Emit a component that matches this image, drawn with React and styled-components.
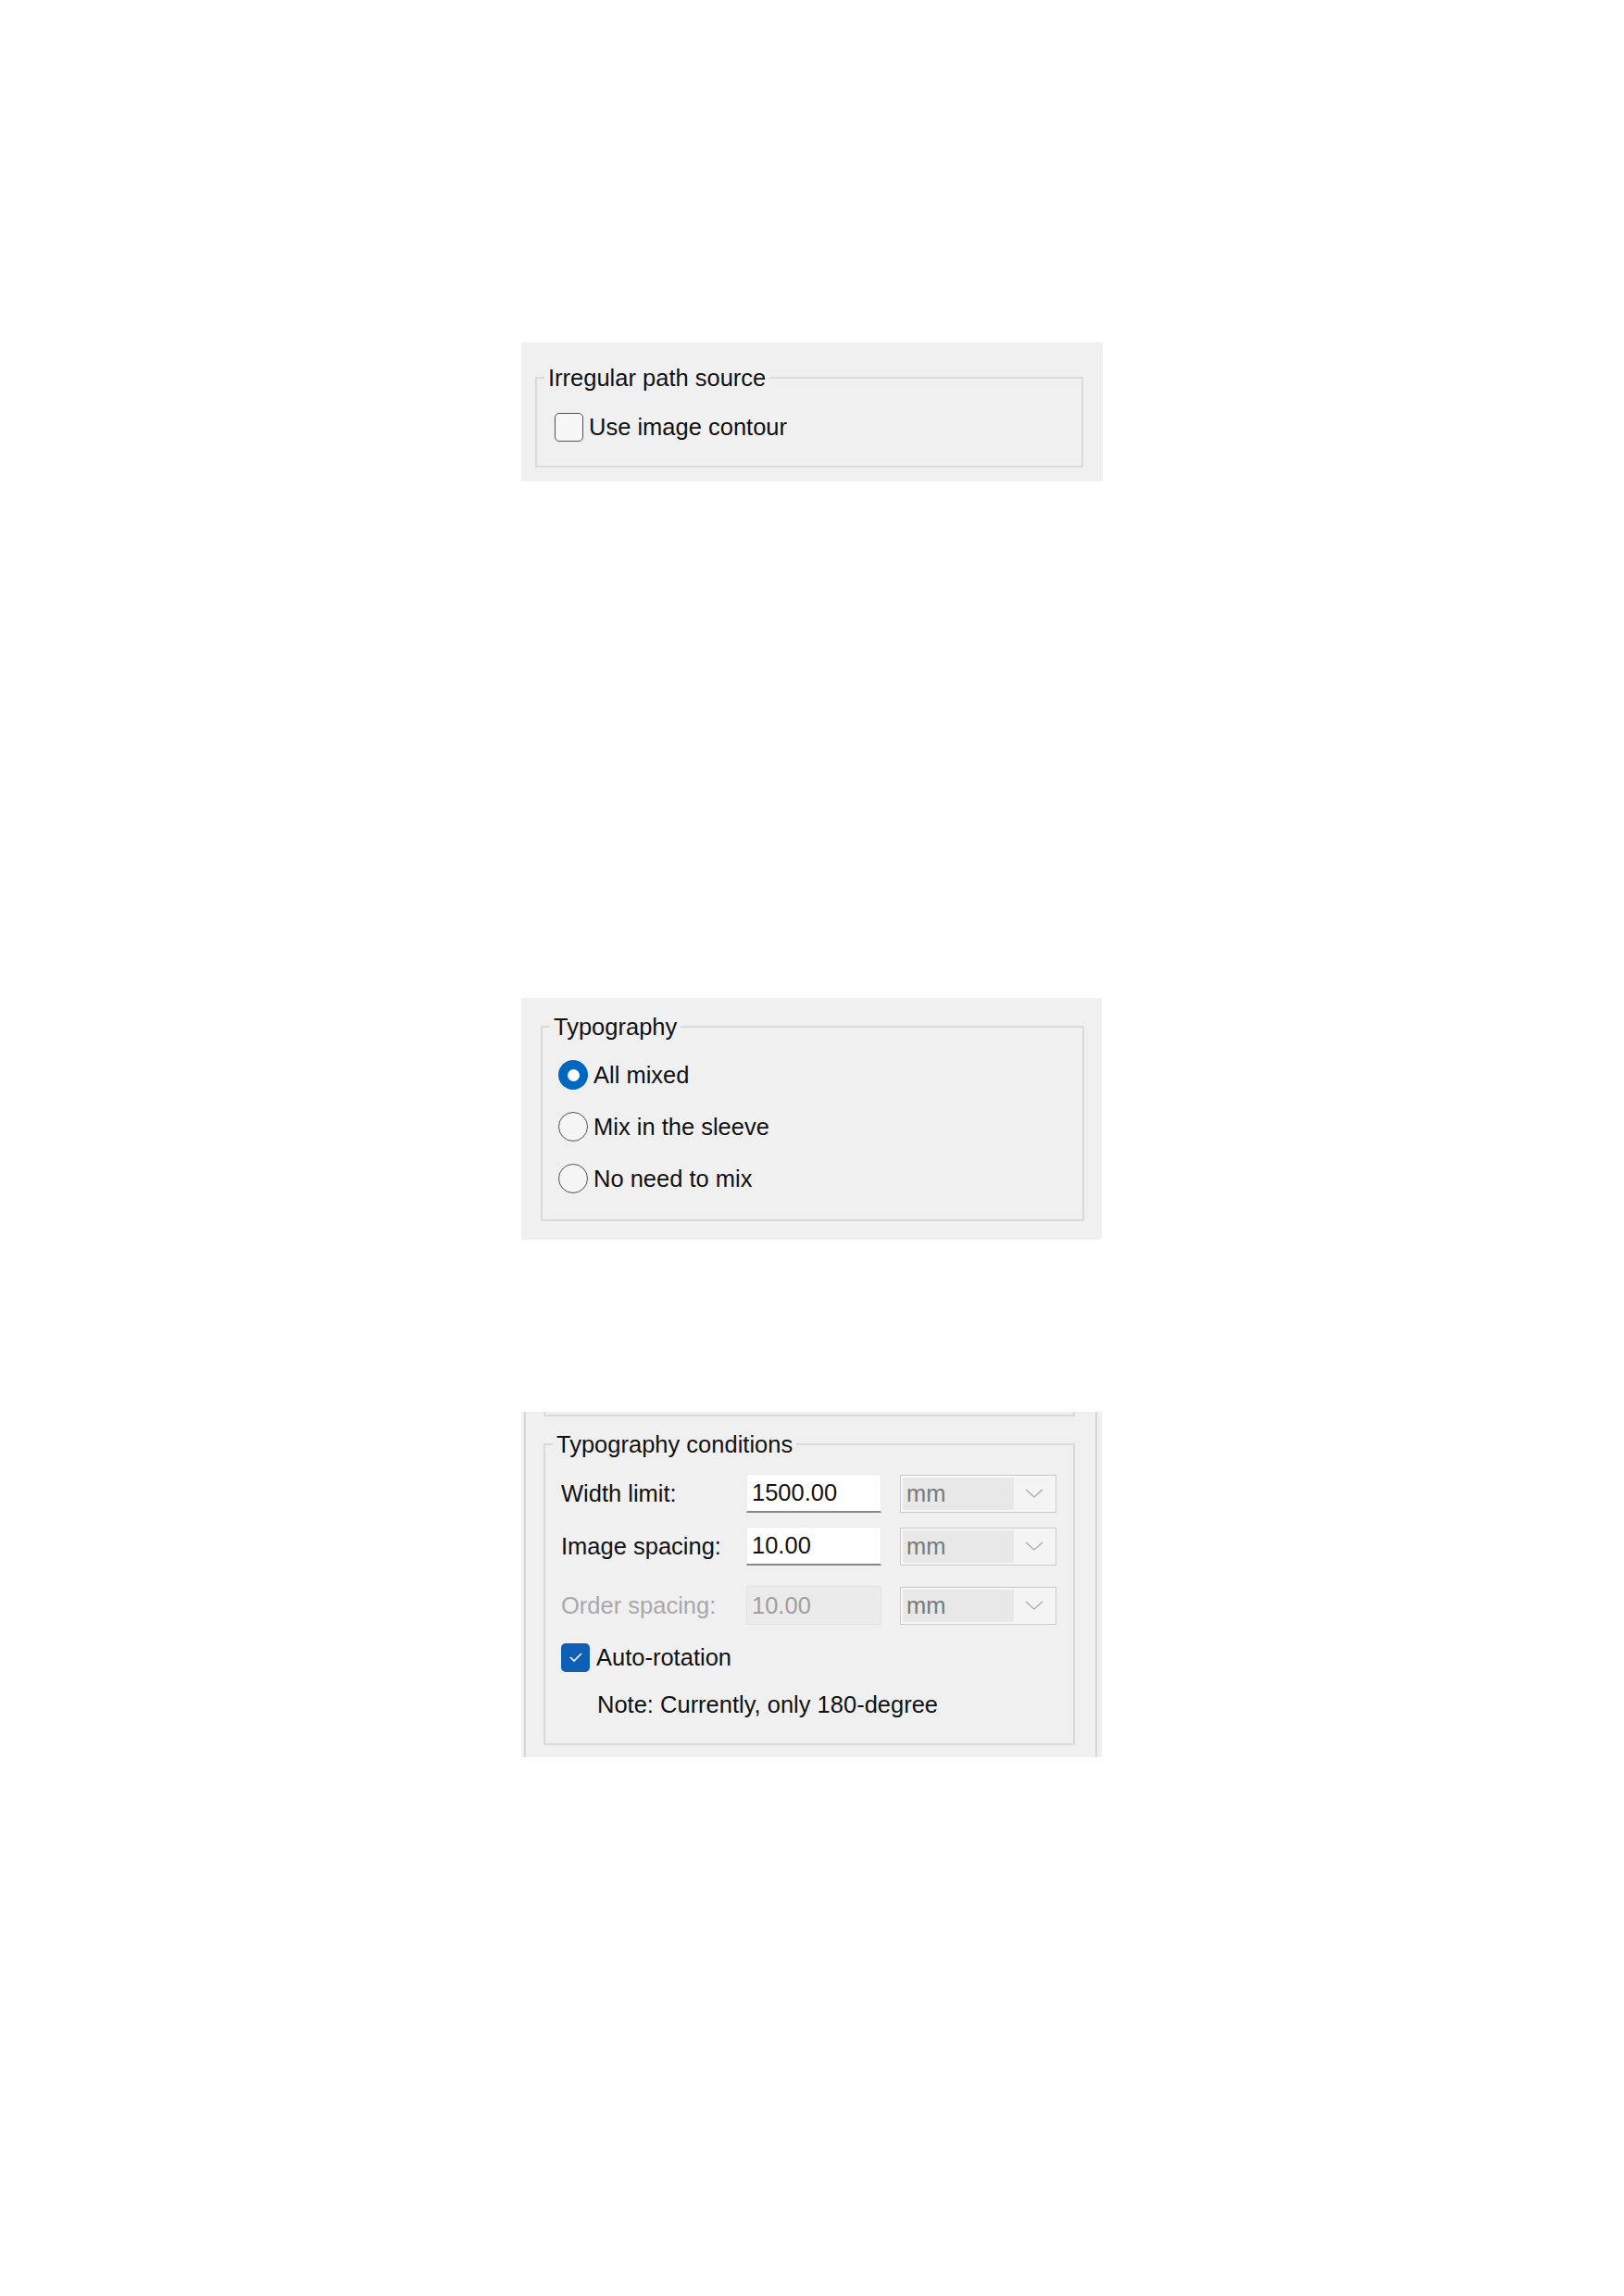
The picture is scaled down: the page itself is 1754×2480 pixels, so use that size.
import React from 'react';
import styled, { createGlobalStyle } from 'styled-components';

const Global = createGlobalStyle`
  html, body { margin: 0; padding: 0; background: #ffffff; }
  body {
    font-family: "Liberation Sans", Arial, sans-serif;
    color: #111111;
  }
`;

const FS = 25.5;

const Page = styled.div`
  display: flex;
  flex-direction: column;
  align-items: flex-start;
  padding-left: 563px;
  padding-bottom: 500px;
`;

const Panel = styled.section`
  box-sizing: border-box;
  width: ${(p) => p.$w}px;
  margin-top: ${(p) => p.$top}px;
  padding: ${(p) => p.$pad};
  background: #f0f0f0;
`;

const ScrollArea = styled.div`
  border-left: 2px solid #d6d6d6;
  border-right: 2px solid #d6d6d6;
  padding: 0 22px 13px 19px;
`;

const PrevGroup = styled.div`
  height: 3px;
  border: 2px solid #dadada;
  border-top: none;
`;

const Group = styled.fieldset`
  margin: ${(p) => p.$mt || 0}px 0 0 0;
  padding: 0;
  min-width: 0;
  border: 2px solid #dadada;
`;

const Legend = styled.legend`
  margin-left: 8px;
  padding: 0 4px;
  font-size: ${FS}px;
  line-height: 30px;
  color: #111111;
`;

const Body = styled.div`
  display: flex;
  flex-direction: column;
  gap: ${(p) => p.$gap || 0}px;
  padding: ${(p) => p.$pad};
`;

const OptionRow = styled.label`
  display: flex;
  align-items: center;
  gap: ${(p) => p.$gap}px;
  height: 32px;
  margin-top: ${(p) => p.$mt || 0}px;
  font-size: ${FS}px;
  line-height: 30px;
  color: #111111;
`;

const CheckBox = styled.span`
  box-sizing: border-box;
  flex: none;
  width: 31px;
  height: 31px;
  border-radius: 5px;
  display: flex;
  align-items: center;
  justify-content: center;
  border: ${(p) => (p.$checked ? 'none' : '1.5px solid #505050')};
  background: ${(p) => (p.$checked ? '#0f5fb6' : '#f7f7f7')};
`;

const RadioCircle = styled.span`
  box-sizing: border-box;
  flex: none;
  width: 32px;
  height: 32px;
  border-radius: 50%;
  display: flex;
  align-items: center;
  justify-content: center;
  border: ${(p) => (p.$checked ? 'none' : '1.5px solid #555555')};
  background: ${(p) => (p.$checked ? '#0067c0' : '#f5f5f5')};
  &::after {
    content: '';
    display: ${(p) => (p.$checked ? 'block' : 'none')};
    width: 13px;
    height: 13px;
    border-radius: 50%;
    background: #ffffff;
  }
`;

const FieldRow = styled.div`
  display: grid;
  grid-template-columns: 180px 146px 169px;
  column-gap: 20px;
  align-items: center;
  height: 42px;
  margin-top: ${(p) => p.$mt || 0}px;
`;

const FieldLabel = styled.span`
  font-size: ${FS}px;
  line-height: 30px;
  white-space: nowrap;
  color: ${(p) => (p.$disabled ? '#a9a9a9' : '#111111')};
`;

const TextInput = styled.input`
  box-sizing: border-box;
  width: 146px;
  height: 42px;
  margin: 0;
  padding: 0 5px;
  font-family: inherit;
  font-size: ${FS}px;
  outline: none;
  background: ${(p) => (p.disabled ? '#ebebeb' : '#ffffff')};
  color: ${(p) => (p.disabled ? '#9f9f9f' : '#111111')};
  border: 1px solid ${(p) => (p.disabled ? '#e3e3e3' : '#ececec')};
  border-bottom: ${(p) => (p.disabled ? '1px solid #e3e3e3' : '2px solid #888888')};
  &:disabled { -webkit-text-fill-color: #9f9f9f; opacity: 1; }
`;

const Select = styled.div`
  box-sizing: border-box;
  display: flex;
  width: 169px;
  height: 41px;
  padding: 2px;
  border: 1px solid #c9c9c9;
  background: #f7f7f7;
`;

const SelectValue = styled.span`
  flex: 1;
  display: flex;
  align-items: center;
  padding-left: 4px;
  background: #e8e8e8;
  font-size: ${FS}px;
  color: #7a7a7a;
`;

const SelectArrow = styled.span`
  flex: none;
  width: 43px;
  display: flex;
  align-items: center;
  justify-content: center;
  background: #f4f4f4;
`;

const Note = styled.div`
  margin-top: 20px;
  padding-left: 39px;
  font-size: ${FS}px;
  line-height: 30px;
  color: #111111;
`;

const Check = () => (
  <svg width="14" height="10" viewBox="0 0 14 10">
    <path d="M1 5 L5 9 L13 1" fill="none" stroke="#ffffff" strokeWidth="1.6" />
  </svg>
);

const Chevron = () => (
  <svg width="20" height="10" viewBox="0 0 20 10">
    <path d="M1 1 L10 9 L19 1" fill="none" stroke="#a8a8a8" strokeWidth="1.3" />
  </svg>
);

const Unit = () => (
  <Select>
    <SelectValue>mm</SelectValue>
    <SelectArrow>
      <Chevron />
    </SelectArrow>
  </Select>
);

export default function App() {
  return (
    <>
      <Global />
      <Page>
        <Panel $w={628} $top={370} $pad="23px 21px 15px 15px">
          <Group>
            <Legend>Irregular path source</Legend>
            <Body $pad="22px 0 26px 19px">
              <OptionRow $gap={6}>
                <CheckBox />
                Use image contour
              </OptionRow>
            </Body>
          </Group>
        </Panel>

        <Panel $w={627} $top={558} $pad="16px 19px 20px 21px">
          <Group>
            <Legend>Typography</Legend>
            <Body $pad="21px 0 28px 17px" $gap={24}>
              <OptionRow $gap={6}>
                <RadioCircle $checked />
                All mixed
              </OptionRow>
              <OptionRow $gap={6}>
                <RadioCircle />
                Mix in the sleeve
              </OptionRow>
              <OptionRow $gap={6}>
                <RadioCircle />
                No need to mix
              </OptionRow>
            </Body>
          </Group>
        </Panel>

        <Panel $w={627} $top={186} $pad="0 5px 0 3px">
          <ScrollArea>
            <PrevGroup />
            <Group $mt={15}>
              <Legend>Typography conditions</Legend>
              <Body $pad="17px 0 27px 17px">
                <FieldRow>
                  <FieldLabel>Width limit:</FieldLabel>
                  <TextInput readOnly defaultValue="1500.00" />
                  <Unit />
                </FieldRow>
                <FieldRow $mt={15}>
                  <FieldLabel>Image spacing:</FieldLabel>
                  <TextInput readOnly defaultValue="10.00" />
                  <Unit />
                </FieldRow>
                <FieldRow $mt={22}>
                  <FieldLabel $disabled>Order spacing:</FieldLabel>
                  <TextInput disabled defaultValue="10.00" />
                  <Unit />
                </FieldRow>
                <OptionRow $gap={7} $mt={19}>
                  <CheckBox $checked>
                    <Check />
                  </CheckBox>
                  Auto-rotation
                </OptionRow>
                <Note>Note: Currently, only 180-degree</Note>
              </Body>
            </Group>
          </ScrollArea>
        </Panel>
      </Page>
    </>
  );
}
